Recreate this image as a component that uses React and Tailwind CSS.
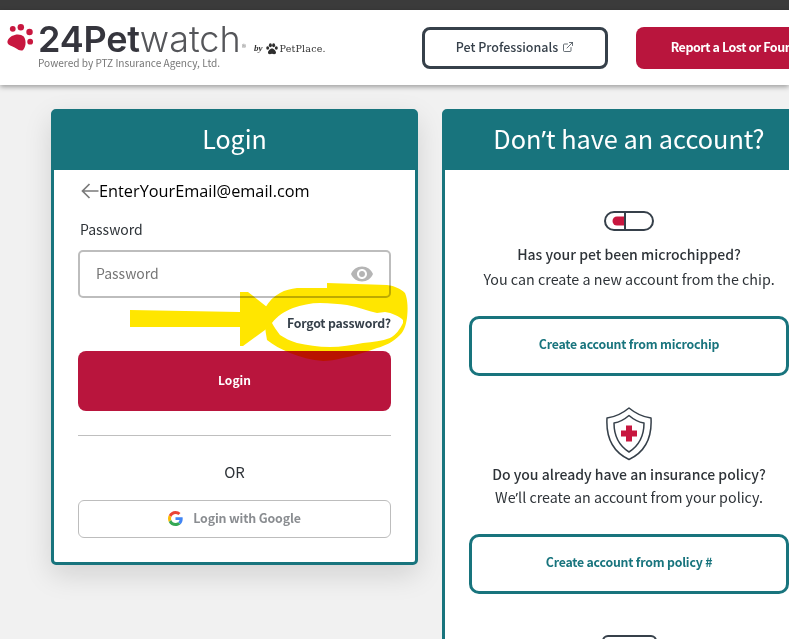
import React from 'react';
import { ExternalLink } from 'lucide-react';

const sans = { fontFamily: '"Noto Sans CJK SC", "Noto Sans", sans-serif' };
const latin = { fontFamily: '"Noto Sans", sans-serif' };

const Paw = ({ className }) => (
  <svg viewBox="20 70 84 90" className={className}>
    <g fill="#c8173f">
      <circle cx="38" cy="88" r="9" />
      <circle cx="63" cy="83" r="10" />
      <circle cx="90" cy="98" r="10" />
      <circle cx="92" cy="128" r="9" />
      <path d="M22 125C30 105 60 100 72 112 82 125 78 150 68 155 55 158 48 145 30 140 22 136 20 130 22 125z" />
    </g>
  </svg>
);

const SmallPaw = () => (
  <svg viewBox="0 0 12 12" className="w-[12px] h-[12px] mr-[1px] shrink-0" fill="#2e2e2e">
    <ellipse cx="1.700" cy="5" rx="1.500" ry="1.800" />
    <ellipse cx="4.400" cy="2.200" rx="1.500" ry="2" />
    <ellipse cx="7.600" cy="2.200" rx="1.500" ry="2" />
    <ellipse cx="10.300" cy="5" rx="1.500" ry="1.800" />
    <path d="M6 5.500c2 0 4 2.500 4 4.300 0 1.800-2.500 1.400-4 1-1.500.4-4 .8-4-1C2 8 4 5.500 6 5.500z" />
  </svg>
);

const Logo = () => (
  <div className="flex flex-col pl-[6px] pb-[2px]">
    <div className="flex items-end h-[28px]">
      <Paw className="w-[29px] h-[29px] mr-[3px] shrink-0" />
      <span className="text-[36px] leading-[26px] font-semibold text-[#35353d] tracking-[-0.200px] whitespace-nowrap" style={{ fontFamily: 'Inter, sans-serif' }}>
        24Pet<span className="font-light text-[#55565a] tracking-[0px]">watch</span>
      </span>
      <span className="text-[9px] leading-[8px] text-[#777] ml-[1px] mr-[8px]">®</span>
      <span className="text-[9px] leading-[8px] italic font-bold text-[#333] mr-[4px]" style={{ fontFamily: '"Liberation Serif", serif' }}>by</span>
      <span className="text-[9.500px] leading-[10px] text-[#333] flex items-center tracking-[0.2px] whitespace-nowrap -mb-[3px]" style={{ fontFamily: '"DejaVu Serif", serif' }}>
        <SmallPaw />
        PetPlace.
      </span>
    </div>
    <span className="text-[10.100px] leading-[12px] mt-[5px] text-[#777] ml-[32px] whitespace-nowrap">Powered by PTZ Insurance Agency, Ltd.</span>
  </div>
);

const GoogleG = () => (
  <svg viewBox="0 0 48 48" className="w-[15px] h-[15px]">
    <path fill="#EA4335" d="M24 9.500c3.500 0 6.700 1.200 9.200 3.600l6.900-6.900C35.900 2.400 30.500 0 24 0 14.600 0 6.500 5.400 2.600 13.200l8 6.200C12.500 13.700 17.800 9.500 24 9.500z" />
    <path fill="#4285F4" d="M47 24.500c0-1.600-.1-3.100-.4-4.500H24v9h12.900c-.6 3-2.200 5.500-4.700 7.200l7.700 6C44.400 38 47 31.800 47 24.500z" />
    <path fill="#FBBC05" d="M10.600 28.600c-.5-1.400-.8-3-.8-4.600s.3-3.200.8-4.600l-8-6.200C.9 16.500 0 20.100 0 24s.9 7.500 2.600 10.800l8-6.200z" />
    <path fill="#34A853" d="M24 48c6.500 0 11.900-2.100 15.900-5.800l-7.700-6c-2.200 1.500-4.900 2.300-8.200 2.300-6.200 0-11.500-4.200-13.400-9.900l-8 6.200C6.500 42.600 14.600 48 24 48z" />
  </svg>
);

const PillIcon = () => (
  <svg viewBox="0 0 50 20" className="w-[50px] h-[20px] block">
    <rect x="1" y="1" width="48" height="18" rx="9" fill="#fff" stroke="#36404a" strokeWidth="2" />
    <path d="M20 5.500h-7a4.500 4.500 0 0 0 0 9h7z" fill="#c8173f" />
    <line x1="21" y1="1" x2="21" y2="19" stroke="#36404a" strokeWidth="2" />
  </svg>
);

const ShieldIcon = () => (
  <svg viewBox="0 0 48 54" className="w-[48px] h-[54px] block">
    <path d="M24 1C30 6 38 10 46 11 47 28 42 44 24 52.500 6 44 1 28 2 11 10 10 18 6 24 1z" fill="#fff" stroke="#36404a" strokeWidth="1.500" strokeLinejoin="round" />
    <path d="M24 8.500C28 12 33 15 39 16 39 28 35 38 24 45 13 38 9 28 9 16 15 15 20 12 24 8.500z" fill="#fff" stroke="#36404a" strokeWidth="1.500" strokeLinejoin="round" />
    <path d="M21 18.500h6v5h5v6h-5v5h-6v-5h-5v-6h5z" fill="#c8173f" />
  </svg>
);

const Header = () => (
  <header className="bg-white h-[75px] flex items-center shrink-0 shadow-[0_2px_5px_rgba(0,0,0,0.35)] relative">
    <div className="w-[422px] shrink-0">
      <Logo />
    </div>
    <button className="w-[186px] h-[42px] shrink-0 border-[3px] border-[#36404a] rounded-lg text-[12.500px] font-medium text-[#36404a] flex items-center justify-center gap-[4px] pb-[1px]">
      Pet Professionals <ExternalLink className="w-[12px] h-[12px]" strokeWidth={1.5} />
    </button>
    <button className="ml-[28px] w-[220px] h-[42px] shrink-0 bg-[#b9153d] rounded-lg text-[12.500px] tracking-[-0.450px] font-bold text-white text-center whitespace-nowrap">
      Report a Lost or Found Pet
    </button>
  </header>
);

const LoginCard = () => (
  <section className="w-[367px] h-[456px] shrink-0 bg-white border-[3px] border-[#18747d] rounded-[5px] shadow-[0_10px_28px_rgba(0,0,0,0.13)]">
    <h2 className="bg-[#18747d] h-[58px] text-white text-[25px] leading-[52px] text-center font-normal">Login</h2>
    <div className="px-[24px]">
      <div className="flex items-center h-[24px] mt-[9px] ml-[3px]">
        <svg viewBox="0 0 18 16" className="w-[18px] h-[16px] shrink-0">
          <path d="M17.500 8H2M8.500 1 1.500 8l7 7" fill="none" stroke="#7a7a7a" strokeWidth="1.700" />
        </svg>
        <span className="text-[16.300px] text-black" style={{ fontFamily: '"Open Sans", sans-serif' }}>EnterYourEmail@email.com</span>
      </div>
      <label className="block mt-[14px] ml-[2px] text-[14px] leading-[24px] text-[#2e3338]">Password</label>
      <div className="mt-[9px] h-[48px] border-2 border-[#bdbdbd] rounded-[5px] flex items-center justify-between pl-[16px] pr-[15px] text-[14px] text-[#757575]">
        <span className="pb-[1px]">Password</span>
        <svg viewBox="0 0 24 24" className="w-[24px] h-[24px]" fill="#b5b5b5">
          <path d="M12 4.500C7 4.500 2.700 7.600 1 12c1.700 4.400 6 7.500 11 7.500s9.300-3.100 11-7.500c-1.700-4.400-6-7.500-11-7.500zM12 17c-2.800 0-5-2.200-5-5s2.200-5 5-5 5 2.200 5 5-2.200 5-5 5zm0-8c-1.700 0-3 1.300-3 3s1.300 3 3 3 3-1.300 3-3-1.300-3-3-3z" />
        </svg>
      </div>
      <div className="mt-[13px] h-[24px] text-right text-[12.300px] leading-[24px] font-semibold tracking-[-0.200px] text-[#36404a]">Forgot password?</div>
      <button className="mt-[16px] w-full h-[60px] bg-[#b9153d] rounded-lg text-white text-[12px] font-bold pb-[3px]">Login</button>
      <hr className="mt-[24px] border-t border-[#bfbfbf]" />
      <div className="mt-[24px] text-center text-[15px] leading-[24px] text-[#2e3338]">OR</div>
      <button className="mt-[16px] w-full h-[38px] border border-[#bdbdbd] rounded-md flex items-center justify-center gap-[10px] text-[12.400px] font-semibold tracking-[-0.150px] text-[#8a8d91] pb-[1px]">
        <GoogleG />
        Login with Google
      </button>
    </div>
  </section>
);

const AccountOption = ({ icon, title, text, action, iconClass, textClass, actionClass }) => (
  <div className="flex flex-col items-center">
    <div className={iconClass}>{icon}</div>
    <h3 className="text-[14px] leading-[24px] font-medium text-[#2e3338] text-center whitespace-nowrap">{title}</h3>
    <p className={`text-[14.300px] leading-[24px] text-[#2e3338] text-center whitespace-nowrap ${textClass}`}>{text}</p>
    <button className={`w-[320px] h-[60px] shrink-0 border-[3px] border-[#18747d] rounded-[10px] text-[12.300px] font-semibold tracking-[-0.200px] text-[#18747d] pb-[4px] ${actionClass}`}>{action}</button>
  </div>
);

const SignupCard = () => (
  <section className="w-[374px] shrink-0 bg-white border-[3px] border-[#18747d] rounded-[5px] h-[600px]">
    <h2 className="bg-[#18747d] h-[58px] text-white text-[25.300px] leading-[52px] text-center font-normal whitespace-nowrap">
      Don<span style={latin}>’</span>t have an account?
    </h2>
    <div className="flex flex-col items-center">
      <AccountOption
        iconClass="mt-[41px] mb-[11px]"
        icon={<PillIcon />}
        title="Has your pet been microchipped?"
        text="You can create a new account from the chip."
        textClass="mt-[1px]"
        actionClass="mt-[25px]"
        action="Create account from microchip"
      />
      <AccountOption
        iconClass="mt-[31px] mb-[1px]"
        icon={<ShieldIcon />}
        title="Do you already have an insurance policy?"
        text={<>We<span style={latin}>’</span>ll create an account from your policy.</>}
        textClass="-mt-[1px]"
        actionClass="mt-[24px]"
        action="Create account from policy #"
      />
      <div className="mt-[41px] w-[55px] h-[30px] border-2 border-[#36404a] rounded-md" />
    </div>
  </section>
);

// hand drawn highlight on top of the screenshot
const Highlight = () => (
  <svg viewBox="0 0 789 639" className="absolute left-0 top-0 w-[789px] h-[639px] mix-blend-multiply pointer-events-none">
    <path fill="#ffe600" d="M130 310 L240 312 L240 292 L248 292 L267 307 L272 323 L265 330 L243 346 L240 346 L240 327 L130 327 Z" />
    <path
      fill="#ffe600"
      fillRule="evenodd"
      d="M265 308 C269 301 274 296 280 293 C285 290 291 289 297 288 L327 288 L327 283 L387 285 C395 286 401 289 405 293 C408 300 408 310 407 318 C406 325 404 331 400 335 C393 342 385 346 377 348 C366 352 354 356 343 358 C336 360 329 361 323 361 C311 360 300 357 290 353 C281 349 273 345 267 340 C265 330 264 318 265 308 Z M272 323 C277 316 285 311 293 308 C301 305 311 303 320 303 C330 303 339 304 347 305 C358 307 368 311 377 313 L385 312 C392 313 399 316 403 320 L403 323 C400 329 396 335 390 338 C382 341 373 342 363 343 C352 345 341 347 330 347 C318 347 307 345 297 343 C290 341 285 338 280 335 C277 331 274 327 272 323 Z"
    />
  </svg>
);

export default function App() {
  return (
    <div className="relative w-[789px] h-[639px] overflow-hidden bg-[#f1f1f1] flex flex-col" style={sans}>
      <div className="h-[10px] bg-[#3b3b3b] shrink-0" />
      <Header />
      <main className="flex items-start gap-[24px] pl-[51px] pt-[24px]">
        <LoginCard />
        <SignupCard />
      </main>
      <Highlight />
    </div>
  );
}
